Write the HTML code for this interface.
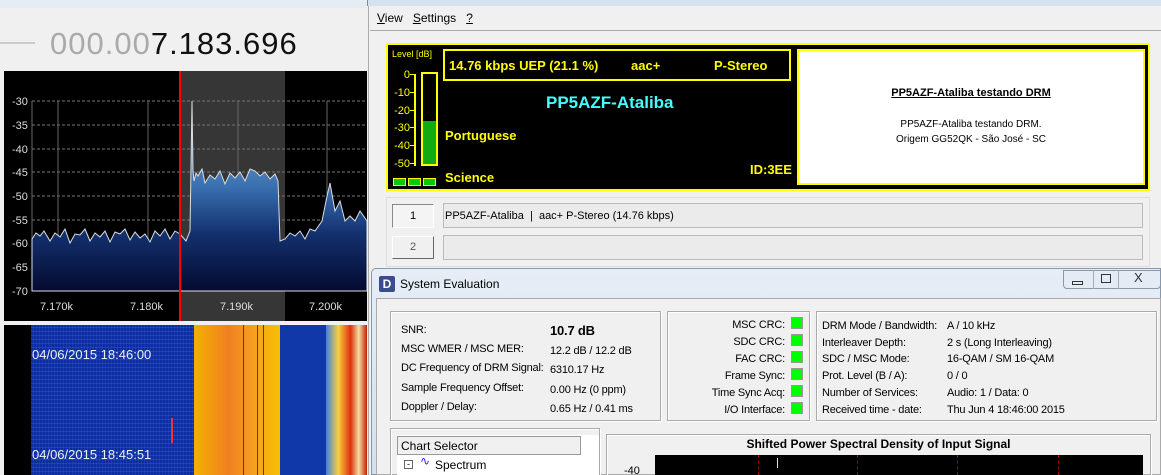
<!DOCTYPE html>
<html><head><meta charset="utf-8"><style>
*{margin:0;padding:0;box-sizing:border-box}
html,body{width:1161px;height:475px;overflow:hidden}
body{background:#f0f0f0;position:relative;font-family:"Liberation Sans",sans-serif}
.a{position:absolute}
.t{position:absolute;white-space:nowrap}
.yl{color:#ff0;font-weight:bold}
.s{font-size:12px;color:#000}
.n{font-size:11px;letter-spacing:-0.2px}
.g{position:absolute;width:12px;height:12px;background:#0f0;border:1px solid #999}
.box{position:absolute;border:1px solid #aaa;box-shadow:inset 1px 1px 0 #fff,1px 1px 0 #fff}
</style></head><body>
<!-- left window -->
<div class="a" style="left:0;top:0;width:367px;height:8px;background:#e6ecf4"></div>
<div class="a" style="left:0;top:42px;width:35px;height:2px;background:#ccc"></div>
<div class="t" style="left:50px;top:26px;font-size:31px;letter-spacing:1px;color:#aaa">000.00<span style="color:#111">7.183.696</span></div>
<div class="a" style="left:4px;top:71px;width:363px;height:250px;background:#000"></div>
<div class="a" style="left:181px;top:71px;width:104px;height:250px;background:#363636"></div>
<svg class="a" style="left:0;top:71px" width="367" height="250">
<defs><linearGradient id="bg" x1="0" y1="0" x2="0" y2="1"><stop offset="0" stop-color="#8fb4d6"/><stop offset=".45" stop-color="#3a70b0"/><stop offset=".7" stop-color="#13306e"/><stop offset="1" stop-color="#050a30"/></linearGradient></defs>
<g stroke="#777" stroke-dasharray="3,2" stroke-width="1">
<line x1="32" y1="30" x2="367" y2="30"/><line x1="32" y1="54" x2="367" y2="54"/><line x1="32" y1="78" x2="367" y2="78"/><line x1="32" y1="101" x2="367" y2="101"/><line x1="32" y1="125" x2="367" y2="125"/><line x1="32" y1="149" x2="367" y2="149"/><line x1="32" y1="196" x2="367" y2="196"/></g>
<g stroke="#666"><line x1="58" y1="30" x2="58" y2="220"/><line x1="148" y1="30" x2="148" y2="220"/><line x1="238" y1="30" x2="238" y2="220"/><line x1="327" y1="30" x2="327" y2="220"/><line x1="32" y1="220" x2="367" y2="220"/><line x1="32" y1="30" x2="32" y2="220"/></g>
<path d="M32,168 L36,162 40,165 44,160 50,170 55,162 60,166 65,158 70,172 75,163 80,164 85,158 90,170 95,162 100,166 105,160 110,171 115,161 120,163 125,158 130,169 135,161 140,167 145,163 150,171 155,160 160,165 165,158 170,168 175,160 180,163 186,170 190,160 192,30 193,100 194,110 196,102 198,105 202,98 205,112 210,104 215,108 220,100 225,113 230,102 235,107 240,101 245,110 250,98 255,100 260,105 265,101 270,108 275,103 278,110 280,170 285,168 290,162 295,165 300,160 305,168 310,158 315,160 322,150 326,130 330,112 335,140 340,130 345,150 350,145 355,150 360,140 367,150 L367,220 L32,220Z" fill="url(#bg)" stroke="#ddd" stroke-width="1"/>
<line x1="180" y1="0" x2="180" y2="250" stroke="#f00" stroke-width="2"/>
<g fill="#ddd" font-size="11" font-family="Liberation Sans"><text x="12" y="34">-30</text><text x="12" y="58">-35</text><text x="12" y="82">-40</text><text x="12" y="105">-45</text><text x="12" y="129">-50</text><text x="12" y="153">-55</text><text x="12" y="176">-60</text><text x="12" y="200">-65</text><text x="12" y="224">-70</text>
<text x="40" y="239">7.170k</text><text x="130" y="239">7.180k</text><text x="220" y="239">7.190k</text><text x="309" y="239">7.200k</text></g>
</svg>
<div class="a" style="left:4px;top:325px;width:363px;height:150px;background:#000"></div>
<div class="a" style="left:31px;top:325px;width:163px;height:150px;background:#0c2ca0"></div>
<div class="a" style="left:31px;top:325px;width:163px;height:150px;background:repeating-linear-gradient(0deg,transparent 0 3px,rgba(60,100,220,.35) 3px 4px),repeating-linear-gradient(90deg,transparent 0 2px,rgba(40,80,200,.4) 2px 3px)"></div>
<div class="a" style="left:194px;top:325px;width:86px;height:150px;background:linear-gradient(90deg,#f5b000,#f08020 40%,#f5a020 70%,#f8c000)"></div>
<div class="a" style="left:243px;top:325px;width:1px;height:150px;background:#d00"></div>
<div class="a" style="left:257px;top:325px;width:1px;height:150px;background:#d00"></div>
<div class="a" style="left:263px;top:325px;width:1px;height:150px;background:#d00"></div>
<div class="a" style="left:280px;top:325px;width:46px;height:150px;background:#1038a8"></div>
<div class="a" style="left:326px;top:325px;width:41px;height:150px;background:linear-gradient(90deg,#4080e0,#f8d040,#e03010 60%,#f0e0a0,#c02000)"></div>
<div class="t" style="left:32px;top:347px;color:#eee;font-size:13px">04/06/2015 18:46:00</div>
<div class="t" style="left:32px;top:447px;color:#eee;font-size:13px">04/06/2015 18:45:51</div>
<div class="a" style="left:171px;top:418px;width:2px;height:25px;background:#e33"></div>
<!-- right main window -->
<div class="a" style="left:367px;top:0;width:794px;height:6px;background:#d6e2f0;border-left:1px solid #888"></div>
<div class="a" style="left:368px;top:6px;width:793px;height:469px;background:#f0f0f0;border-left:1px solid #aaa"></div>
<div class="t s" style="left:377px;top:11px;font-size:12px"><u>V</u>iew&nbsp;&nbsp; <u>S</u>ettings&nbsp;&nbsp; <u>?</u></div>
<div class="a" style="left:370px;top:30px;width:791px;height:1px;background:#aaa"></div>
<div class="a" style="left:386px;top:43px;width:764px;height:148px;background:#000;border:2px solid #ff0"></div>
<div class="t" style="left:392px;top:49px;font-size:9px;color:#ff0">Level [dB]</div>
<div class="t" style="left:390px;top:67px;font-size:11px;color:#ff0;line-height:17.8px;text-align:right;width:20px">0<br>-10<br>-20<br>-30<br>-40<br>-50</div>
<div class="a" style="left:414px;top:74px;width:2px;height:92px;background:#ff0"></div>
<div class="a" style="left:410px;top:74px;width:6px;height:1px;background:#ff0;box-shadow:0 18px #ff0,0 36px #ff0,0 53px #ff0,0 71px #ff0,0 89px #ff0"></div>
<div class="a" style="left:421px;top:72px;width:17px;height:94px;border:2px solid #ff0"></div>
<div class="a" style="left:423px;top:121px;width:13px;height:43px;background:#1a1"></div>
<div class="a" style="left:393px;top:178px;width:13px;height:8px;background:#0c0;border:1px solid #ff0"></div>
<div class="a" style="left:408px;top:178px;width:13px;height:8px;background:#0c0;border:1px solid #ff0"></div>
<div class="a" style="left:423px;top:178px;width:13px;height:8px;background:#0c0;border:1px solid #ff0"></div>
<div class="a" style="left:443px;top:49px;width:348px;height:32px;border:2px solid #ff0"></div>
<div class="t yl" style="left:449px;top:58px;font-size:13px">14.76 kbps UEP (21.1 %)</div>
<div class="t yl" style="left:631px;top:58px;font-size:13px">aac+</div>
<div class="t yl" style="left:714px;top:58px;font-size:13px">P-Stereo</div>
<div class="t" style="left:546px;top:93px;color:#4ff;font-size:17px;font-weight:bold">PP5AZF-Ataliba</div>
<div class="t yl" style="left:445px;top:128px;font-size:13px">Portuguese</div>
<div class="t yl" style="left:445px;top:170px;font-size:13px">Science</div>
<div class="t yl" style="left:750px;top:162px;font-size:13px">ID:3EE</div>
<div class="a" style="left:797px;top:49px;width:348px;height:136px;background:#fff;border:2px solid #ff0"></div>
<div class="t" style="left:797px;top:87px;width:348px;text-align:center;font-size:11px;font-weight:bold;text-decoration:underline;color:#000">PP5AZF-Ataliba testando DRM</div>
<div class="t" style="left:797px;top:117px;width:348px;text-align:center;font-size:10px;line-height:15px;color:#000">PP5AZF-Ataliba testando DRM.<br>Origem GG52QK - São José - SC</div>
<div class="a" style="left:386px;top:197px;width:764px;height:70px;border:1px solid #ddd"></div>
<div class="a" style="left:392px;top:204px;width:42px;height:24px;background:#f4f4f4;border:1px solid #888;border-color:#888 #fff #fff #888;font-size:11px;text-align:center;line-height:22px">1</div>
<div class="a" style="left:443px;top:203px;width:700px;height:25px;border:1px solid #bbb;background:#ebebeb"></div>
<div class="t s" style="left:445px;top:210px;font-size:11px">PP5AZF-Ataliba&nbsp; |&nbsp; aac+ P-Stereo (14.76 kbps)</div>
<div class="a" style="left:392px;top:236px;width:42px;height:23px;background:#f0f0f0;border:1px solid #666;border-color:#fff #666 #666 #fff;font-size:11px;text-align:center;line-height:21px;color:#555">2</div>
<div class="a" style="left:443px;top:235px;width:700px;height:25px;border:1px solid #bbb;background:#ebebeb"></div>
<!-- System Evaluation -->
<div class="a" style="left:371px;top:268px;width:790px;height:207px;background:linear-gradient(#e6edf6,#d4e0ee);border:1px solid #8898a8;border-radius:5px 0 0 0"></div>
<div class="a" style="left:379px;top:276px;width:16px;height:16px;background:#3a4c8c;border-radius:2px;color:#fff;font-weight:bold;font-size:12px;text-align:center;line-height:16px">D</div>
<div class="t" style="left:400px;top:277px;font-size:12px;color:#000">System Evaluation</div>
<div class="a" style="left:1063px;top:270px;width:98px;height:19px;border:1px solid #8898a8;border-radius:0 0 4px 4px;background:#e4ebf4"></div>
<div class="a" style="left:1093px;top:270px;width:1px;height:19px;background:#aab"></div>
<div class="a" style="left:1118px;top:270px;width:1px;height:19px;background:#aab"></div>
<div class="a" style="left:1072px;top:281px;width:11px;height:4px;border:1px solid #333"></div>
<div class="a" style="left:1101px;top:274px;width:10px;height:9px;border:1px solid #333"></div>
<div class="t" style="left:1134px;top:270px;font-size:13px;color:#333">X</div>
<div class="a" style="left:376px;top:298px;width:785px;height:177px;background:#f0f0f0;border:1px solid #aaa"></div>
<div class="box" style="left:390px;top:311px;width:271px;height:110px"></div>
<div class="box" style="left:667px;top:311px;width:143px;height:110px"></div>
<div class="box" style="left:816px;top:311px;width:341px;height:110px"></div>
<div class="t s n" style="left:401px;top:321px;line-height:19.2px">SNR:<br>MSC WMER / MSC MER:<br>DC Frequency of DRM Signal:<br>Sample Frequency Offset:<br>Doppler / Delay:</div>
<div class="t s n" style="left:550px;top:321px;line-height:19.2px"><b style="font-size:13px">10.7 dB</b><br>12.2 dB / 12.2 dB<br>6310.17 Hz<br>0.00 Hz (0 ppm)<br>0.65 Hz / 0.41 ms</div>
<div class="t s n" style="left:640px;top:317px;line-height:17px;text-align:right;width:145px">MSC CRC:<br>SDC CRC:<br>FAC CRC:<br>Frame Sync:<br>Time Sync Acq:<br>I/O Interface:</div>
<div class="g" style="left:791px;top:317px"></div><div class="g" style="left:791px;top:334px"></div><div class="g" style="left:791px;top:351px"></div><div class="g" style="left:791px;top:368px"></div><div class="g" style="left:791px;top:385px"></div><div class="g" style="left:791px;top:402px"></div>
<div class="t s n" style="left:822px;top:318px;line-height:16.7px">DRM Mode / Bandwidth:<br>Interleaver Depth:<br>SDC / MSC Mode:<br>Prot. Level (B / A):<br>Number of Services:<br>Received time - date:</div>
<div class="t s n" style="left:947px;top:318px;line-height:16.7px">A / 10 kHz<br>2 s (Long Interleaving)<br>16-QAM / SM 16-QAM<br>0 / 0<br>Audio: 1 / Data: 0<br>Thu Jun 4 18:46:00 2015</div>
<div class="box" style="left:390px;top:428px;width:210px;height:60px"></div>
<div class="a" style="left:397px;top:435px;width:202px;height:40px;background:#fff"></div>
<div class="a" style="left:397px;top:436px;width:184px;height:19px;background:#f0f0f0;border:1px solid #999"></div>
<div class="t s" style="left:401px;top:439px">Chart Selector</div>
<div class="a" style="left:404px;top:460px;width:9px;height:9px;border:1px solid #666;font-size:9px;line-height:6px;text-align:center">-</div>
<div class="t" style="left:420px;top:454px;color:#22f;font-size:12px">∿</div>
<div class="t s" style="left:435px;top:458px">Spectrum</div>
<div class="box" style="left:606px;top:434px;width:545px;height:60px"></div>
<div class="t" style="left:606px;top:437px;width:545px;text-align:center;font-size:12px;font-weight:bold">Shifted Power Spectral Density of Input Signal</div>
<div class="a" style="left:655px;top:455px;width:488px;height:20px;background:#000"></div>
<div class="a" style="left:758px;top:455px;width:1px;height:20px;border-left:1px dashed #a00"></div>
<div class="a" style="left:857px;top:455px;width:1px;height:20px;border-left:1px dashed #a00"></div>
<div class="a" style="left:957px;top:455px;width:1px;height:20px;border-left:1px dashed #a00"></div>
<div class="a" style="left:1058px;top:455px;width:1px;height:20px;border-left:1px dashed #a00"></div>
<div class="a" style="left:777px;top:458px;width:1px;height:10px;background:#ff0"></div>
<div class="t s" style="left:624px;top:465px;font-size:11px">-40</div>
</body></html>
